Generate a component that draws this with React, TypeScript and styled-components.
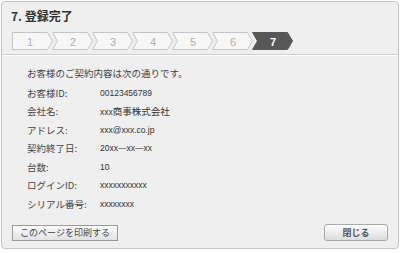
import styled, { createGlobalStyle } from 'styled-components';

const GlobalStyle = createGlobalStyle`
    html, body {
        margin: 0;
        padding: 0;
        background: #ffffff;
    }
    body {
        font-family: "Noto Sans CJK JP", "Liberation Sans", sans-serif;
        color: #333;
    }
`;

const Page = styled.div`
    padding: 1px 0 0 1px;
`;

const Dialog = styled.section`
    width: 398px;
    height: 248px;
    box-sizing: border-box;
    border: 1px solid #c4c4c4;
    border-radius: 4px;
    background: #efefef;
    display: flex;
    flex-direction: column;
`;

const Header = styled.header`
    height: 53px;
    box-sizing: border-box;
    padding: 6px 0 0 9px;
    border-bottom: 1px solid #cfcfcf;
    box-shadow: 0 1px 0 #ffffff;
`;

const Title = styled.h1`
    margin: 0;
    font-size: 12px;
    line-height: 16px;
    font-weight: bold;
    color: #333;
`;

const Stepper = styled.ol`
    display: flex;
    list-style: none;
    margin: 8px 0 0 1px;
    padding: 0;
`;

const StepItem = styled.li<{ first: boolean }>`
    display: block;
    width: 41px;
    height: 18px;
    margin-left: ${(p) => (p.first ? '0' : '-1px')};

    svg {
        display: block;
    }
`;

const Body = styled.div`
    flex: 1;
    padding: 9px 0 0 25px;
    font-size: 9.5px;
    color: #444;
`;

const Intro = styled.p`
    margin: 0 0 1px;
    line-height: 18.5px;
`;

const InfoList = styled.dl`
    margin: 0;
    display: grid;
    grid-template-columns: 73px 1fr;
    grid-auto-rows: 18.5px;
    align-items: center;
`;

const Label = styled.dt`
    margin: 0;
    font-size: 9.5px;
    color: #444;
`;

const Value = styled.dd`
    margin: 0;
    font-family: "Liberation Sans", "Noto Sans CJK JP", sans-serif;
    font-size: 8.5px;
    color: #333;
`;

const Kanji = styled.span`
    font-family: "Noto Sans CJK JP", sans-serif;
    font-size: 9.5px;
`;

const Footer = styled.footer`
    display: flex;
    justify-content: space-between;
    align-items: flex-end;
    padding: 0 10px 7px;
`;

const PrintButton = styled.button`
    height: 16px;
    width: 106px;
    padding: 0;
    border: 1px solid #9a9a9a;
    background: linear-gradient(#fbfbfb, #e2e2e2);
    font-family: "Noto Sans CJK JP", sans-serif;
    font-size: 9px;
    line-height: 14px;
    color: #444;
    cursor: pointer;
`;

const CloseButton = styled.button`
    height: 17px;
    width: 64px;
    padding: 0;
    border: 1px solid #a8a8a8;
    border-radius: 3px;
    background: linear-gradient(#fdfdfd, #dcdcdc);
    box-shadow: 0 1px 0 #ffffff inset;
    font-family: "Noto Sans CJK JP", sans-serif;
    font-size: 9px;
    font-weight: bold;
    line-height: 15px;
    color: #555;
    cursor: pointer;
`;

const steps = [1, 2, 3, 4, 5, 6, 7];
const current = 7;

function Step({ n }: { n: number }) {
    const active = n === current;
    const points =
        n === 1
            ? '0.5,0.5 35.5,0.5 40.5,9 35.5,17.5 0.5,17.5'
            : '0.5,0.5 35.5,0.5 40.5,9 35.5,17.5 0.5,17.5 5.5,9';
    return (
        <StepItem first={n === 1}>
            <svg width="41" height="18" viewBox="0 0 41 18">
                <polygon
                    points={points}
                    fill={active ? '#575757' : '#f7f7f7'}
                    stroke={active ? '#575757' : '#c6c6c6'}
                    strokeWidth="1"
                />
                <text
                    x={n === 1 ? 18 : 21}
                    y="13.5"
                    textAnchor="middle"
                    fontFamily="'Liberation Sans', sans-serif"
                    fontSize="11"
                    fontWeight={active ? 'bold' : 'normal'}
                    fill={active ? '#ffffff' : '#b0b0b0'}
                >
                    {n}
                </text>
            </svg>
        </StepItem>
    );
}

export default function App() {
    return (
        <Page>
            <GlobalStyle />
            <Dialog>
                <Header>
                    <Title>7. 登録完了</Title>
                    <Stepper>
                        {steps.map((n) => (
                            <Step key={n} n={n} />
                        ))}
                    </Stepper>
                </Header>
                <Body>
                    <Intro>お客様のご契約内容は次の通りです。</Intro>
                    <InfoList>
                        <Label>お客様ID:</Label>
                        <Value>00123456789</Value>
                        <Label>会社名:</Label>
                        <Value>
                            xxx<Kanji>商事株式会社</Kanji>
                        </Value>
                        <Label>アドレス:</Label>
                        <Value>xxx@xxx.co.jp</Value>
                        <Label>契約終了日:</Label>
                        <Value>20xx—xx—xx</Value>
                        <Label>台数:</Label>
                        <Value>10</Value>
                        <Label>ログインID:</Label>
                        <Value>xxxxxxxxxxx</Value>
                        <Label>シリアル番号:</Label>
                        <Value>xxxxxxxx</Value>
                    </InfoList>
                </Body>
                <Footer>
                    <PrintButton>このページを印刷する</PrintButton>
                    <CloseButton>閉じる</CloseButton>
                </Footer>
            </Dialog>
        </Page>
    );
}
